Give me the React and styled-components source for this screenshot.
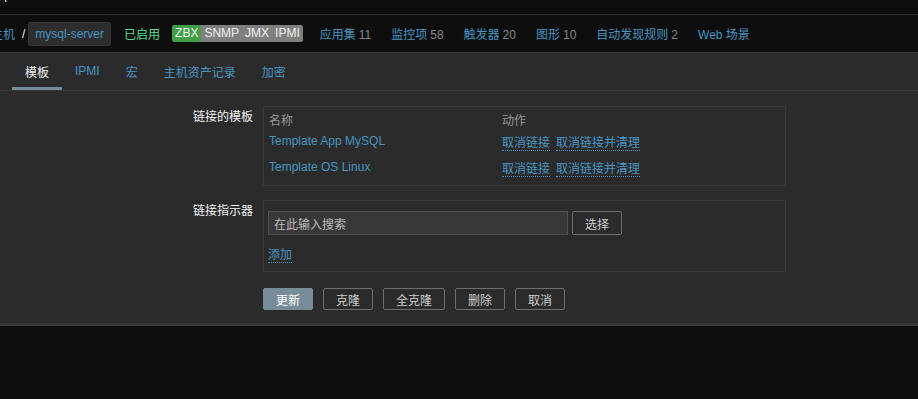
import styled, { createGlobalStyle } from "styled-components";

const GlobalStyle = createGlobalStyle`
  html, body {
    margin: 0;
    padding: 0;
    background: #0e0e0e;
    font-family: "Liberation Sans", Arial, "Noto Sans CJK SC", sans-serif;
    font-size: 12px;
    color: #f2f2f2;
  }
  * { box-sizing: border-box; }
`;

const TopStrip = styled.div`
    height: 15px;
    overflow: hidden;
    border-bottom: 1px solid #303030;
    line-height: 14px;
    color: #f2f2f2;
    span {
      display: block;
      margin-top: -9px;
      margin-left: -2px;
      font-size: 13px;
    }
  `,
  Nav = styled.div`
    height: 38px;
    display: flex;
    align-items: center;
    border-bottom: 1px solid #383838;
    white-space: nowrap;
  `,
  Crumb = styled.span`
    color: #4796c4;
    margin-left: -9px;
  `,
  Sep = styled.span`
    color: #f2f2f2;
    margin: 0 3px 0 7px;
  `,
  HostBox = styled.span`
    display: inline-flex;
    align-items: center;
    height: 24px;
    padding: 0 6px;
    background: #2d2d2d;
    border: 1px solid #353535;
    border-radius: 2px;
    color: #4796c4;
  `,
  Status = styled.span`
    color: #59db8f;
    margin-left: 13px;
  `,
  Badges = styled.span`
    display: inline-flex;
    margin-left: 12px;
    height: 17px;
    line-height: 17px;
    border-radius: 2px;
    overflow: hidden;
  `,
  Badge = styled.span`
    padding: 0 3px;
    color: #f2f2f2;
    background: ${(p) => (p.$on ? "#429e47" : "#7f7f7f")};
  `,
  NavLinks = styled.span`
    display: flex;
    gap: 20px;
    margin-left: 17px;
  `,
  NavLink = styled.span`
    color: #4796c4;
    em {
      font-style: normal;
      color: #888888;
      margin-left: 3px;
    }
  `,
  Panel = styled.div`
    background: #2b2b2b;
    border-bottom: 3px solid #383838;
    padding-bottom: 13px;
  `,
  Tabs = styled.div`
    display: flex;
    height: 38px;
    padding-left: 12px;
    border-bottom: 1px solid #383838;
  `,
  Tab = styled.div`
    display: flex;
    align-items: center;
    padding: 2px 13px 0;
    color: ${(p) => (p.$active ? "#f2f2f2" : "#4796c4")};
    border-bottom: 3px solid ${(p) => (p.$active ? "#768d99" : "transparent")};
  `,
  Form = styled.div`
    padding-top: 15px;
    display: grid;
    grid-template-columns: 253px 523px;
    column-gap: 10px;
    row-gap: 14px;
  `,
  Label = styled.div`
    text-align: right;
    padding-top: 4px;
    color: #f2f2f2;
    line-height: 14px;
  `,
  Box = styled.div`
    border: 1px solid #383838;
    padding: ${(p) => p.$pad || "4px 5px 5px"};
  `,
  Table = styled.table`
    border-collapse: collapse;
    width: 100%;
    th {
      font-weight: normal;
      text-align: left;
      color: #999999;
      height: 16px;
      padding: 0;
    }
    td {
      height: 26px;
      padding: 0;
    }
    td:first-child, th:first-child {
      width: 233px;
    }
  `,
  A = styled.span`
    color: #4796c4;
  `,
  DotLink = styled.span`
    color: #4796c4;
    border-bottom: 1px dotted #4796c4;
    margin-right: 6px;
  `,
  InputRow = styled.div`
    display: flex;
    gap: 4px;
    margin-top: 10px;
  `,
  Input = styled.div`
    width: 300px;
    height: 24px;
    background: #383838;
    border: 1px solid #4f4f4f;
    color: #bdbdbd;
    padding: 0 5px;
    display: flex;
    align-items: center;
  `,
  Button = styled.button`
    font: inherit;
    height: ${(p) => p.$h || "22px"};
    padding: 0 ${(p) => p.$px || "12px"};
    min-width: 50px;
    border-radius: 2px;
    border: 1px solid ${(p) => (p.$primary ? "#768d99" : "#6e6e6e")};
    background: ${(p) => (p.$primary ? "#768d99" : "transparent")};
    color: ${(p) => (p.$primary ? "#ffffff" : "#cfcfcf")};
  `,
  AddLink = styled.div`
    margin-top: 10px;
    margin-bottom: 9px;
    span {
      color: #4796c4;
      border-bottom: 1px dotted #4796c4;
    }
  `,
  Actions = styled.div`
    grid-column: 2;
    display: flex;
    gap: 10px;
    padding-top: 2px;
  `;

const links = [
  ["应用集", "11"],
  ["监控项", "58"],
  ["触发器", "20"],
  ["图形", "10"],
  ["自动发现规则", "2"],
  ["Web 场景", ""],
];

const templates = ["Template App MySQL", "Template OS Linux"];

export default function App() {
  return (
    <>
      <GlobalStyle />
      <TopStrip>
        <span>A</span>
      </TopStrip>
      <Nav>
        <Crumb>主机</Crumb>
        <Sep>/</Sep>
        <HostBox>mysql-server</HostBox>
        <Status>已启用</Status>
        <Badges>
          <Badge $on>ZBX</Badge>
          <Badge>SNMP</Badge>
          <Badge>JMX</Badge>
          <Badge>IPMI</Badge>
        </Badges>
        <NavLinks>
          {links.map(([name, n]) => (
            <NavLink key={name}>
              {name}
              {n && <em>{n}</em>}
            </NavLink>
          ))}
        </NavLinks>
      </Nav>
      <Panel>
        <Tabs>
          <Tab $active>模板</Tab>
          <Tab>IPMI</Tab>
          <Tab>宏</Tab>
          <Tab>主机资产记录</Tab>
          <Tab>加密</Tab>
        </Tabs>
        <Form>
          <Label>链接的模板</Label>
          <Box>
            <Table>
              <thead>
                <tr>
                  <th>名称</th>
                  <th>动作</th>
                </tr>
              </thead>
              <tbody>
                {templates.map((t) => (
                  <tr key={t}>
                    <td>
                      <A>{t}</A>
                    </td>
                    <td>
                      <DotLink>取消链接</DotLink>
                      <DotLink>取消链接并清理</DotLink>
                    </td>
                  </tr>
                ))}
              </tbody>
            </Table>
          </Box>
          <Label>链接指示器</Label>
          <Box $pad="0 4px">
            <InputRow>
              <Input>在此输入搜索</Input>
              <Button $h="24px" $px="8px">选择</Button>
            </InputRow>
            <AddLink>
              <span>添加</span>
            </AddLink>
          </Box>
          <Actions>
            <Button $primary>更新</Button>
            <Button>克隆</Button>
            <Button>全克隆</Button>
            <Button>删除</Button>
            <Button>取消</Button>
          </Actions>
        </Form>
      </Panel>
    </>
  );
}
